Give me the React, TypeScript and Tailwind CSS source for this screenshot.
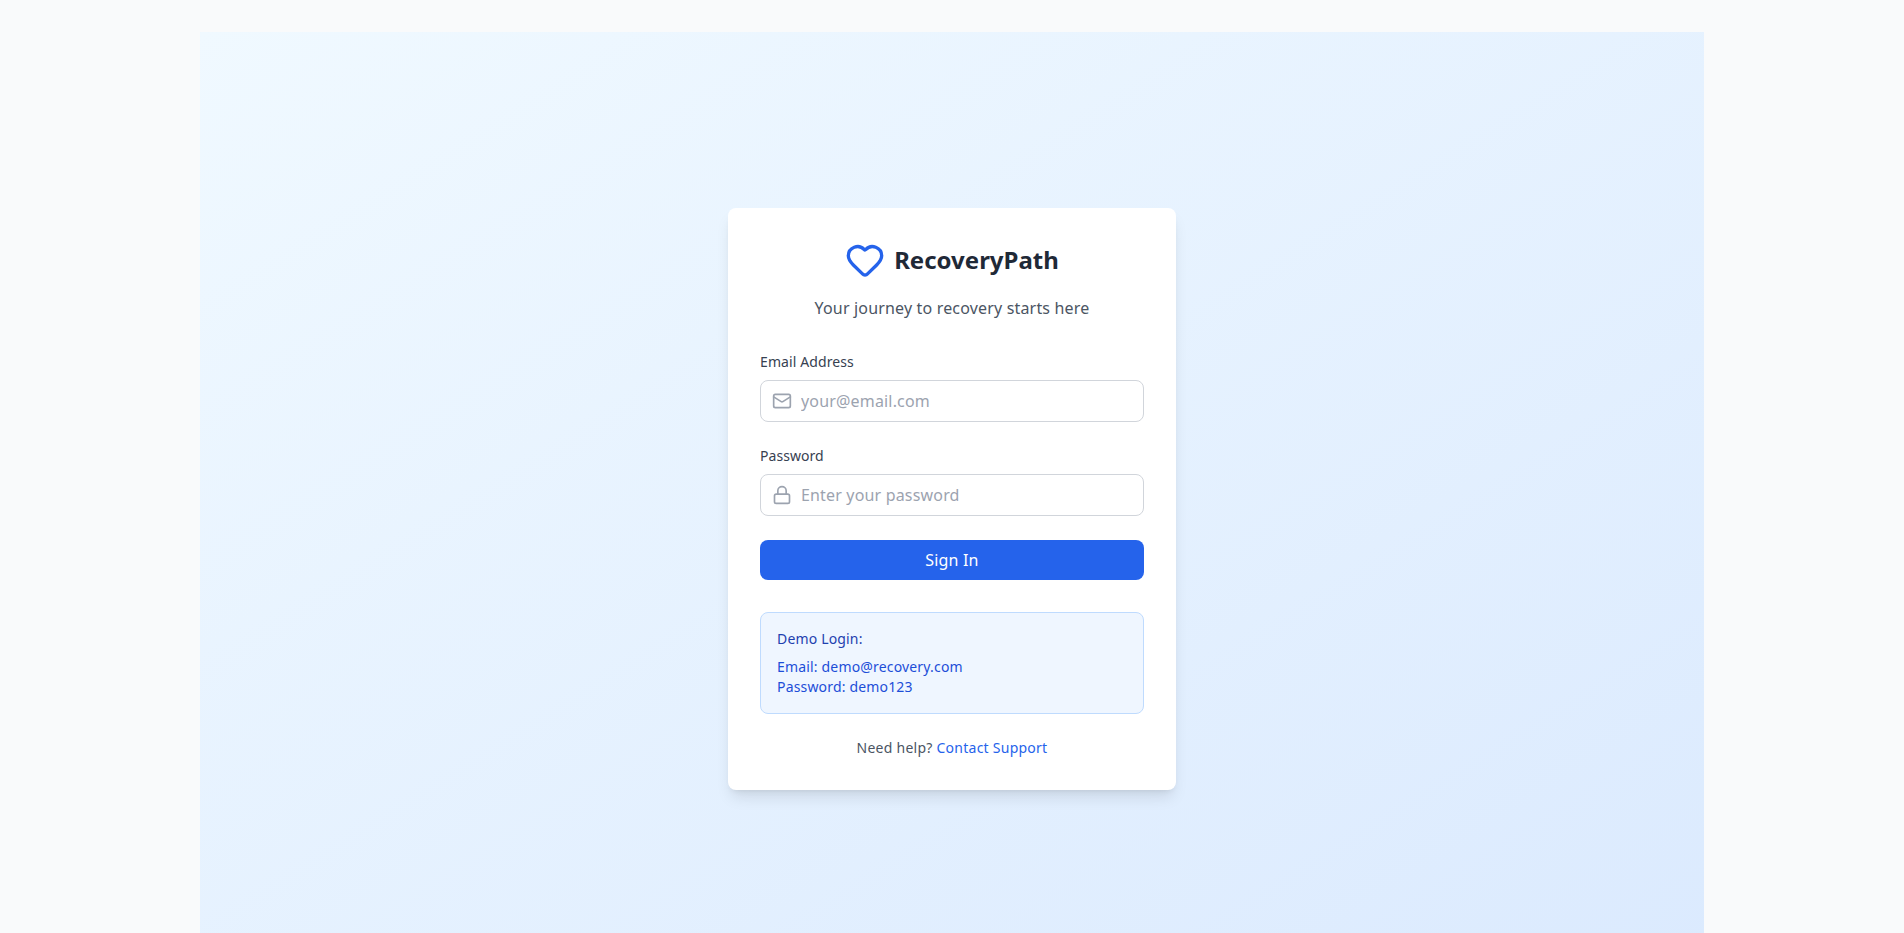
import { Heart, Mail, Lock } from "lucide-react";

export default function App() {
  return (
    <div className="h-screen overflow-hidden bg-[#f9fafb] font-['Noto_Sans','Open_Sans',sans-serif] tracking-[0.17px]">
      <div className="mx-auto mt-8 flex min-h-screen w-[1504px] items-center justify-center bg-gradient-to-br from-[#f0f9ff] to-[#dbeafe]">
        <div className="w-[448px] rounded-lg bg-white p-8 shadow-lg">
          <div className="mb-8 text-center">
            <div className="mb-4 flex items-center justify-center gap-[9px]">
              <Heart className="h-10 w-10 text-[#2563eb]" />
              <h1 className="text-2xl font-bold tracking-normal text-[#1f2937]">RecoveryPath</h1>
            </div>
            <p className="text-base text-[#4b5563]">Your journey to recovery starts here</p>
          </div>
          <form>
            <div className="mb-6">
              <label className="mb-2 block text-sm tracking-[0.1px] text-[#374151]">Email Address</label>
              <div className="flex h-[42px] items-center gap-[9px] rounded-lg border border-[#d1d5db] pl-[11px] pr-3">
                <Mail className="h-5 w-5 shrink-0 text-[#9ca3af]" />
                <input className="w-full text-base tracking-[0.17px] outline-none placeholder:text-[#9ca3af]" placeholder="your@email.com" />
              </div>
            </div>
            <div className="mb-6">
              <label className="mb-2 block text-sm tracking-[0.05px] text-[#374151]">Password</label>
              <div className="flex h-[42px] items-center gap-[9px] rounded-lg border border-[#d1d5db] pl-[11px] pr-3">
                <Lock className="h-5 w-5 shrink-0 text-[#9ca3af]" />
                <input className="w-full text-base tracking-[0.17px] outline-none placeholder:text-[#9ca3af]" placeholder="Enter your password" />
              </div>
            </div>
            <button type="button" className="h-10 w-full rounded-lg bg-[#2563eb] text-base text-white">Sign In</button>
          </form>
          <div className="mt-8 rounded-lg border border-[#bfdbfe] bg-[#eff6ff] p-4 text-sm">
            <p className="mb-2 text-[#1e40af]">Demo Login:</p>
            <p className="text-[#1d4ed8]">Email: demo@recovery.com</p>
            <p className="text-[#1d4ed8]">Password: demo123</p>
          </div>
          <p className="mt-6 text-center text-sm tracking-[0.25px] text-[#4b5563]">
            Need help? <a className="text-[#2563eb]">Contact Support</a>
          </p>
        </div>
      </div>
    </div>
  );
}
